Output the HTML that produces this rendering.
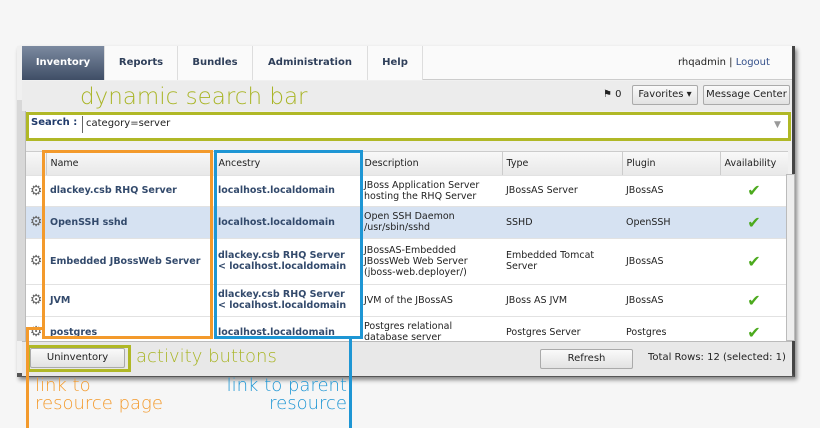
<!DOCTYPE html><html><head><style>
*{margin:0;padding:0;box-sizing:border-box}
body{width:820px;height:428px;background:#f6f6f6;position:relative;overflow:hidden;font-family:"DejaVu Sans","Liberation Sans",sans-serif;font-size:10px;color:#222}
.a{position:absolute}
.win{left:17px;top:46px;width:778px;height:331px;background:#f0f0f0;border-right:3px solid #444;border-bottom:4px solid #555;box-shadow:2px 3px 4px #888}
.tab{top:46px;height:34px;line-height:34px;text-align:center;font-weight:bold;font-size:10px;color:#2f3f5a;border-right:1px solid #ddd;background:#fafafa}
.btn{border:1px solid #aaa;border-radius:2px;background:linear-gradient(#fafafa,#e2e2e2);text-align:center;font-size:10px}
.ann{font-family:"DejaVu Sans","Liberation Sans",sans-serif;font-weight:200}
table{border-collapse:collapse;table-layout:fixed}
td{border-bottom:1px solid #e2e2e2;padding:0 4px;font-size:9.5px;vertical-align:middle}
td.n,td.an{font-weight:bold;color:#334a6c}
.ck{color:#4caa1e;font-size:16px;text-align:center;font-weight:bold}
.g{color:#666;font-size:14px;text-align:center;padding:0}
</style></head><body>
<div class="a win"></div>
<div class="a" style="left:17px;top:100px;width:9px;height:241px;background:#d8d8d8;border-right:1px solid #bbb"></div>
<div class="a" style="left:22px;top:46px;width:770px;height:34px;background:#fafafa;border-bottom:1px solid #ccc"></div>
<div class="a tab" style="left:22px;width:83px;background:linear-gradient(#7c8aa0,#3f4e66);color:#fff">Inventory</div>
<div class="a tab" style="left:105px;width:73px">Reports</div>
<div class="a tab" style="left:178px;width:75px">Bundles</div>
<div class="a tab" style="left:253px;width:115px">Administration</div>
<div class="a tab" style="left:368px;width:55px">Help</div>
<div class="a" style="left:678px;top:57px;font-size:10px">rhqadmin | <span style="color:#34508a">Logout</span></div>
<div class="a" style="left:22px;top:81px;width:770px;height:30px;background:#ececec"></div>
<div class="a" style="left:603px;top:89px;font-size:10px">⚑ 0</div>
<div class="a btn" style="left:632px;top:85px;width:66px;height:20px;line-height:18px">Favorites ▾</div>
<div class="a btn" style="left:703px;top:85px;width:87px;height:20px;line-height:18px">Message Center</div>
<div class="a ann" style="left:80px;top:84px;font-size:23px;color:#a9b526">dynamic search bar</div>
<div class="a" style="left:26px;top:112px;width:765px;height:29px;border:3px solid #b0b826;background:#fff"></div>
<div class="a" style="left:31px;top:117px;font-weight:bold;color:#1f3a6a;font-size:10px">Search :</div>
<div class="a" style="left:82px;top:116px;width:705px;height:17px;border-left:1px solid #666;padding-left:3px;font-size:10px;line-height:16px">category=server</div>
<div class="a" style="left:774px;top:120px;color:#999;font-size:9px">▼</div>
<div class="a" style="left:26px;top:151px;width:762px;height:190px;background:#fff;border-top:1px solid #ccc;overflow:hidden">
<table style="width:762px">
<colgroup><col style="width:20px"><col style="width:168px"><col style="width:146px"><col style="width:142px"><col style="width:120px"><col style="width:98px"><col style="width:68px"></colgroup>
<tr style="height:23px;background:linear-gradient(#f8f8f8,#e8e8e8)"><td></td><td style="border-left:1px solid #ccc">Name</td><td style="border-left:1px solid #ccc">Ancestry</td><td style="border-left:1px solid #ccc">Description</td><td style="border-left:1px solid #ccc">Type</td><td style="border-left:1px solid #ccc">Plugin</td><td style="border-left:1px solid #ccc">Availability</td></tr>
<tr style="height:31px"><td class="g">⚙</td><td class="n">dlackey.csb RHQ Server</td><td class="an">localhost.localdomain</td><td>JBoss Application Server hosting the RHQ Server</td><td>JBossAS Server</td><td>JBossAS</td><td class="ck">✔</td></tr>
<tr style="height:32px;background:#d6e2f2"><td class="g">⚙</td><td class="n">OpenSSH sshd</td><td class="an">localhost.localdomain</td><td>Open SSH Daemon /usr/sbin/sshd</td><td>SSHD</td><td>OpenSSH</td><td class="ck">✔</td></tr>
<tr style="height:46px"><td class="g">⚙</td><td class="n">Embedded JBossWeb Server</td><td class="an">dlackey.csb RHQ Server &lt; localhost.localdomain</td><td>JBossAS-Embedded JBossWeb Web Server (jboss-web.deployer/)</td><td>Embedded Tomcat Server</td><td>JBossAS</td><td class="ck">✔</td></tr>
<tr style="height:32px"><td class="g">⚙</td><td class="n">JVM</td><td class="an">dlackey.csb RHQ Server &lt; localhost.localdomain</td><td>JVM of the JBossAS</td><td>JBoss AS JVM</td><td>JBossAS</td><td class="ck">✔</td></tr>
<tr style="height:32px"><td class="g">⚙</td><td class="n">postgres</td><td class="an">localhost.localdomain</td><td>Postgres relational database server</td><td>Postgres Server</td><td>Postgres</td><td class="ck">✔</td></tr>
</table></div>
<div class="a" style="left:786px;top:174px;width:9px;height:167px;background:#eee;border:1px solid #bbb"></div>
<div class="a" style="left:22px;top:341px;width:770px;height:35px;background:#e8e8e8;border-top:1px solid #bbb"></div>
<div class="a btn" style="left:30px;top:348px;width:95px;height:20px;line-height:18px">Uninventory</div>
<div class="a" style="left:27px;top:345px;width:104px;height:27px;border:3px solid #b0b826"></div>
<div class="a ann" style="left:136px;top:346px;font-size:18px;color:#a9b526">activity buttons</div>
<div class="a btn" style="left:540px;top:349px;width:93px;height:20px;line-height:18px">Refresh</div>
<div class="a" style="left:648px;top:352px;font-size:10px">Total Rows: 12 (selected: 1)</div>
<div class="a" style="left:42px;top:150px;width:171px;height:189px;border:3px solid #f39a2c"></div>
<div class="a" style="left:214px;top:150px;width:149px;height:189px;border:3px solid #1e96d4"></div>
<div class="a" style="left:26px;top:327px;width:3px;height:101px;background:#f39a2c"></div>
<div class="a" style="left:26px;top:327px;width:18px;height:3px;background:#f39a2c"></div>
<div class="a" style="left:349px;top:339px;width:3px;height:89px;background:#1e96d4"></div>
<div class="a ann" style="left:35px;top:377px;font-size:18px;line-height:18px;color:#f39a2c">link to<br>resource page</div>
<div class="a ann" style="left:200px;top:377px;width:147px;text-align:right;font-size:18px;line-height:18px;color:#1e96d4">link to parent<br>resource</div>
</body></html>
